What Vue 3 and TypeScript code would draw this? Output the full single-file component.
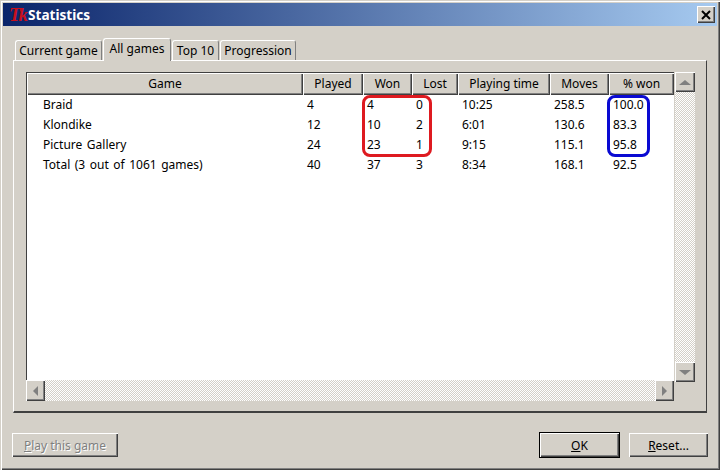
<script setup lang="ts">
const headers = ['Game', 'Played', 'Won', 'Lost', 'Playing time', 'Moves', '% won']
const rows = [
  ['Braid', '4', '4', '0', '10:25', '258.5', '100.0'],
  ['Klondike', '12', '10', '2', '6:01', '130.6', '83.3'],
  ['Picture Gallery', '24', '23', '1', '9:15', '115.1', '95.8'],
  ['Total (3 out of 1061 games)', '40', '37', '3', '8:34', '168.1', '92.5'],
]
const tabs = ['Current game', 'All games', 'Top 10', 'Progression']
</script>

<template>
  <div class="window">
    <div class="titlebar">
      <span class="logo">Tk</span>
      <span class="title">Statistics</span>
      <button class="close" aria-label="Close">
        <svg width="10" height="10" viewBox="0 0 10 10"><path d="M1 1L9 9M9 1L1 9" stroke="#000" stroke-width="2" /></svg>
      </button>
    </div>
    <div class="tabs">
      <div v-for="t in tabs" :key="t" class="tab" :class="{ active: t === 'All games' }">{{ t }}</div>
    </div>
    <div class="panel">
      <div class="tree-area">
        <div class="tree-col">
          <div class="tree">
            <div class="head">
              <div v-for="h in headers" :key="h" class="hcell">{{ h }}</div>
            </div>
            <div class="body">
              <div v-for="r in rows" :key="r[0]" class="row">
                <div v-for="(c, i) in r" :key="i" class="cell">{{ c }}</div>
              </div>
              <div class="mark red"></div>
              <div class="mark blue"></div>
            </div>
          </div>
          <div class="hscroll">
            <div class="sbtn wide"><span class="arrow left"></span></div>
            <div class="track"></div>
            <div class="sbtn wide"><span class="arrow right"></span></div>
          </div>
        </div>
        <div class="vscroll">
          <div class="sbtn tall"><span class="arrow up"></span></div>
          <div class="track"></div>
          <div class="sbtn tall"><span class="arrow down"></span></div>
        </div>
      </div>
    </div>
    <div class="footer">
      <button class="btn play" disabled><u>P</u>lay this game</button>
      <div class="spacer"></div>
      <button class="btn ok"><u>O</u>K</button>
      <button class="btn reset"><u>R</u>eset...</button>
    </div>
  </div>
</template>

<style>
html, body { margin: 0; background: #d4d0c8; }
</style>

<style scoped>
.window {
  width: 720px;
  height: 470px;
  box-sizing: border-box;
  padding: 3px;
  background: #d4d0c8;
  position: relative;
  overflow: hidden;
  font-family: "Noto Sans", sans-serif;
  font-size: 12px;
  color: #000;
  box-shadow: inset 1px 1px 0 #d4d0c8, inset 2px 2px 0 #fff, inset -1px -1px 0 #404040, inset -2px -2px 0 #808080;
}
.titlebar {
  height: 23px;
  display: flex;
  align-items: center;
  background: linear-gradient(90deg, #0a246a, #a6caf0);
  padding: 0 2px 0 3px;
}
.logo {
  font-family: "Liberation Serif", serif;
  font-style: italic;
  font-weight: bold;
  font-size: 19px;
  color: #c8101c;
  width: 22px;
  letter-spacing: -2px;
  padding-left: 3px;
  box-sizing: border-box;
}
.title {
  color: #fff;
  font-weight: bold;
  font-size: 13.6px;
  flex: 1;
}
.close {
  width: 18px;
  height: 17px;
  padding: 0;
  display: flex;
  align-items: center;
  justify-content: center;
  background: #d4d0c8;
  border: none;
  box-shadow: inset 1px 1px 0 #fff, inset -1px -1px 0 #404040, inset -2px -2px 0 #808080;
}
.tabs {
  display: flex;
  align-items: flex-end;
  height: 34px;
  padding-left: 12px;
  position: relative;
  z-index: 1;
}
.tab {
  height: 20px;
  line-height: 20px;
  padding: 0;
  box-sizing: border-box;
  margin-right: 1px;
  background: #d4d0c8;
  border-top: 1px solid #fff;
  border-left: 1px solid #fff;
  border-right: 1px solid #808080;
  border-radius: 3px 3px 0 0;
  white-space: nowrap;
  text-align: center;
  width: 87px;
}
.tab:nth-child(2) { width: 68px; height: 23px; line-height: 20px; margin-bottom: -1px; padding-bottom: 2px; }
.tab:nth-child(3) { width: 47px; }
.tab:nth-child(4) { width: 76px; }
.panel {
  margin-left: 10px;
  width: 694px;
  height: 353px;
  box-sizing: border-box;
  padding: 11px 12px 10px 12px;
  border-top: 1px solid #fff;
  border-left: 1px solid #fff;
  border-right: 1px solid #404040;
  border-bottom: 2px solid #404040;
}
.tree-area { display: flex; height: 100%; }
.tree-col { display: flex; flex-direction: column; width: 648px; }
.tree {
  flex: 1;
  display: flex;
  flex-direction: column;
  border-top: 1px solid #404040;
  border-left: 1px solid #404040;
  min-height: 0;
}
.head, .row {
  display: grid;
  grid-template-columns: 276px 60px 49px 46px 92px 59px 65px;
}
.head {
  height: 21px;
  border-bottom: 1px solid #404040;
}
.hcell {
  background: #d4d0c8;
  text-align: center;
  line-height: 22px;
  box-shadow: inset 1px 1px 0 #fff, inset -1px -1px 0 #404040, inset -2px -2px 0 #808080;
}
.body {
  flex: 1;
  background: #fff;
  position: relative;
}
.row { height: 20px; line-height: 20px; word-spacing: 1.4px; }
.cell { padding-left: 4px; white-space: nowrap; }
.cell:first-child { padding-left: 16px; }
.mark {
  position: absolute;
  box-sizing: border-box;
  border: 3px solid;
  border-radius: 8px;
  top: 0;
  height: 62px;
}
.red { left: 335px; width: 70px; border-color: #de1a20; }
.blue { left: 580px; width: 43px; border-color: #0a0ad2; }
.track {
  flex: 1;
  background-image: repeating-conic-gradient(#fff 0 25%, #d4d0c8 0 50%);
  background-size: 2px 2px;
}
.hscroll { display: flex; height: 21px; flex: none; }
.vscroll { display: flex; flex-direction: column; width: 20px; height: 310px; margin-left: 1px; }
.sbtn {
  background: #d4d0c8;
  display: flex;
  align-items: center;
  justify-content: center;
  flex: none;
  box-shadow: inset 1px 1px 0 #fff, inset -1px -1px 0 #404040, inset -2px -2px 0 #808080;
}
.wide { width: 19px; height: 21px; }
.tall { height: 20px; width: 20px; }
.arrow { width: 0; height: 0; border-style: solid; border-color: transparent; }
.arrow.left { border-width: 5px 5px 5px 0; border-right-color: #808080; }
.arrow.right { border-width: 5px 0 5px 5px; border-left-color: #808080; }
.arrow.up { border-width: 0 6px 5px; border-bottom-color: #808080; }
.arrow.down { border-width: 5px 6px 0; border-top-color: #808080; }
.footer {
  display: flex;
  align-items: center;
  height: 26px;
  margin-top: 19px;
  padding-left: 9px;
  padding-right: 9px;
}
.spacer { flex: 1; }
.btn {
  font: inherit;
  height: 24px;
  padding: 0;
  background: #d4d0c8;
  border: none;
  color: #000;
  box-shadow: inset 1px 1px 0 #fff, inset -1px -1px 0 #404040, inset -2px -2px 0 #808080;
}
.play { width: 106px; color: #808080; text-shadow: 1px 1px 0 #fff; }
.ok {
  width: 81px;
  height: 26px;
  margin-right: 9px;
  outline: 1px solid #000;
  outline-offset: -1px;
  box-shadow: inset 2px 2px 0 #fff, inset -2px -2px 0 #404040, inset -3px -3px 0 #808080;
}
.reset { width: 79px; }
</style>
